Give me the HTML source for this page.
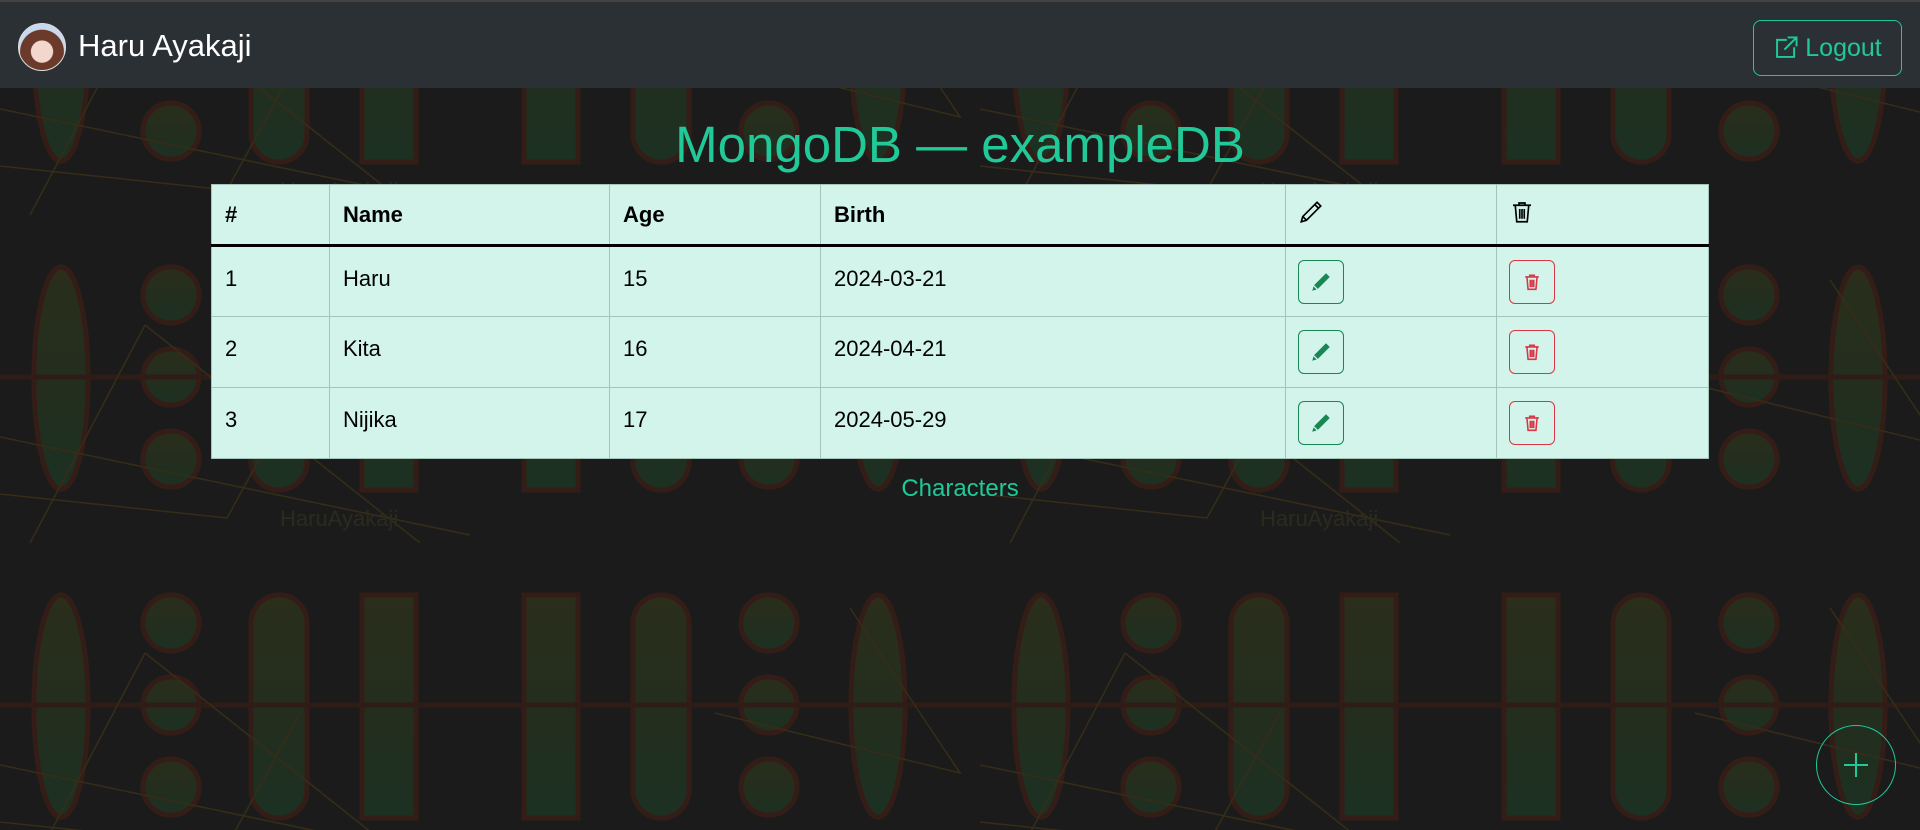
<!DOCTYPE html>
<html><head><meta charset="utf-8"><style>
*{box-sizing:border-box;margin:0;padding:0}
html,body{width:1920px;height:830px;overflow:hidden;background:#1b1b1b;font-family:"Liberation Sans",sans-serif}
#bg{position:absolute;left:0;top:0}
nav{position:absolute;left:0;top:0;width:1920px;height:88px;background:#2b3035;border-top:2px solid #444}
.avatar{position:absolute;left:18px;top:21px;width:48px;height:48px;border-radius:50%;background:radial-gradient(circle at 50% 60%,#f3d6cc 0 30%,#6b3a2a 32% 60%,#c8d8ee 62%);border:1px solid #ddd}
.brand{position:absolute;left:78px;top:26px;color:#fff;font-size:31px}
.logout{position:absolute;left:1753px;top:18px;width:149px;height:56px;border:1.5px solid #20c997;border-radius:8px;color:#20c997;font-size:25px;display:flex;align-items:center;justify-content:center;gap:6px}
h1{position:absolute;left:0;width:1920px;top:115px;text-align:center;color:#20c997;font-weight:normal;font-size:51px}
table{position:absolute;left:211px;top:184px;width:1498px;border-collapse:collapse;background:#d2f4ea;font-size:22px;color:#000}
td,th{border:1px solid #a6c3b9;text-align:left;padding:0 13px;font-weight:normal}
th{height:61px;font-weight:bold;font-size:22px;border-bottom:3px solid #000}
td{height:71px;padding-bottom:6px}
td:nth-child(n+5){padding-bottom:0}
.btn{display:flex;width:46px;height:44px;border-radius:6px;align-items:center;justify-content:center;margin-left:-1px}
.e{border:1px solid #198754}.d{border:1px solid #dc3545}
.cap{position:absolute;left:0;width:1920px;top:475px;text-align:center;color:#20c997;font-size:24px}
.fab{position:absolute;left:1816px;top:725px;width:80px;height:80px;border-radius:50%;border:1px solid #20c997;display:flex;align-items:center;justify-content:center}
</style></head><body>
<svg id="bg" width="1920" height="830">
<defs>
<linearGradient id="g" x1="0" y1="0" x2="0" y2="1"><stop offset="0" stop-color="#2a2e1b"/><stop offset="0.5" stop-color="#242e1e"/><stop offset="1" stop-color="#1c3122"/></linearGradient>
<pattern id="p" width="980" height="328" patternUnits="userSpaceOnUse" y="215">
<g stroke="#351d17" stroke-width="5" fill="url(#g)">
<ellipse cx="61" cy="163" rx="27" ry="111"/>
<circle cx="171" cy="80" r="28"/><circle cx="171" cy="162" r="28"/><circle cx="171" cy="244" r="28"/>
<rect x="251" y="52" width="56" height="223" rx="28"/>
<rect x="362" y="52" width="54" height="223"/>
<rect x="524" y="52" width="54" height="223"/>
<rect x="633" y="52" width="56" height="223" rx="28"/>
<circle cx="769" cy="80" r="28"/><circle cx="769" cy="162" r="28"/><circle cx="769" cy="244" r="28"/>
<ellipse cx="878" cy="163" rx="27" ry="111"/>
</g>
<line x1="0" y1="162" x2="980" y2="162" stroke="#2f1c16" stroke-width="5"/>
<g stroke="#362c17" stroke-width="1.5" fill="none">
<polyline points="0,279 227,303 300,170"/>
<polyline points="145,110 0,385"/>
<polyline points="145,110 420,328"/>
<polyline points="0,222 470,320"/>
<polyline points="715,170 960,230 850,65"/>
</g>
<text x="280" y="311" font-size="22" fill="#2a2a1f" font-family="Liberation Sans">HaruAyakaji</text>
</pattern>
</defs>
<rect width="1920" height="830" fill="url(#p)"/>
</svg>
<nav><div class="avatar"></div><div class="brand">Haru Ayakaji</div>
<div class="logout"><svg width="26" height="26" viewBox="0 0 16 16" fill="none" stroke="#20c997" stroke-width="1.2"><path d="M8.5 3H2.5v10.5H13V7.5"/><path d="M9 1.5h5.5V7M14.5 1.5L7 9"/></svg>Logout</div></nav>
<h1>MongoDB — exampleDB</h1>
<table>
<tr><th style="width:118px">#</th><th style="width:280px">Name</th><th style="width:211px">Age</th><th style="width:465px">Birth</th><th style="width:211px"><svg width="24" height="24" viewBox="0 0 16 16" fill="none" stroke="#000" stroke-width="1.1"><path d="M12 1.5l2.5 2.5L5 13.5 1.5 14.5 2.5 11z M10.5 3l2.5 2.5 M2.5 11l2.5 2.5"/></svg></th><th><svg width="24" height="24" viewBox="0 0 16 16" fill="none" stroke="#000" stroke-width="1.1"><path d="M2 3.5h12M6 3.5V2h4v1.5M3.5 3.5l1 11h7l1-11M6.5 6v6.5M8 6v6.5M9.5 6v6.5"/></svg></th></tr>
<tr><td>1</td><td>Haru</td><td>15</td><td>2024-03-21</td><td><div class="btn e"><svg width="20" height="20" viewBox="0 0 16 16"><path fill="#198754" d="M12 1l3 3-9.5 9.5-3-3z M2 11.5l2.5 2.5L1 15z"/></svg></div></td><td><div class="btn d"><svg width="18" height="20" viewBox="0 0 16 16" fill="none" stroke="#dc3545" stroke-width="1.4"><path d="M2 3.5h12M6 3.5V2h4v1.5M3.5 3.5l1 11h7l1-11M6.5 6v6.5M8 6v6.5M9.5 6v6.5"/></svg></div></td></tr>
<tr><td>2</td><td>Kita</td><td>16</td><td>2024-04-21</td><td><div class="btn e"><svg width="20" height="20" viewBox="0 0 16 16"><path fill="#198754" d="M12 1l3 3-9.5 9.5-3-3z M2 11.5l2.5 2.5L1 15z"/></svg></div></td><td><div class="btn d"><svg width="18" height="20" viewBox="0 0 16 16" fill="none" stroke="#dc3545" stroke-width="1.4"><path d="M2 3.5h12M6 3.5V2h4v1.5M3.5 3.5l1 11h7l1-11M6.5 6v6.5M8 6v6.5M9.5 6v6.5"/></svg></div></td></tr>
<tr><td>3</td><td>Nijika</td><td>17</td><td>2024-05-29</td><td><div class="btn e"><svg width="20" height="20" viewBox="0 0 16 16"><path fill="#198754" d="M12 1l3 3-9.5 9.5-3-3z M2 11.5l2.5 2.5L1 15z"/></svg></div></td><td><div class="btn d"><svg width="18" height="20" viewBox="0 0 16 16" fill="none" stroke="#dc3545" stroke-width="1.4"><path d="M2 3.5h12M6 3.5V2h4v1.5M3.5 3.5l1 11h7l1-11M6.5 6v6.5M8 6v6.5M9.5 6v6.5"/></svg></div></td></tr>
</table>
<div class="cap">Characters</div>
<div class="fab"><svg width="28" height="28" viewBox="0 0 28 28" stroke="#20c997" stroke-width="2"><path d="M14 2v24M2 14h24"/></svg></div>
</body></html>
